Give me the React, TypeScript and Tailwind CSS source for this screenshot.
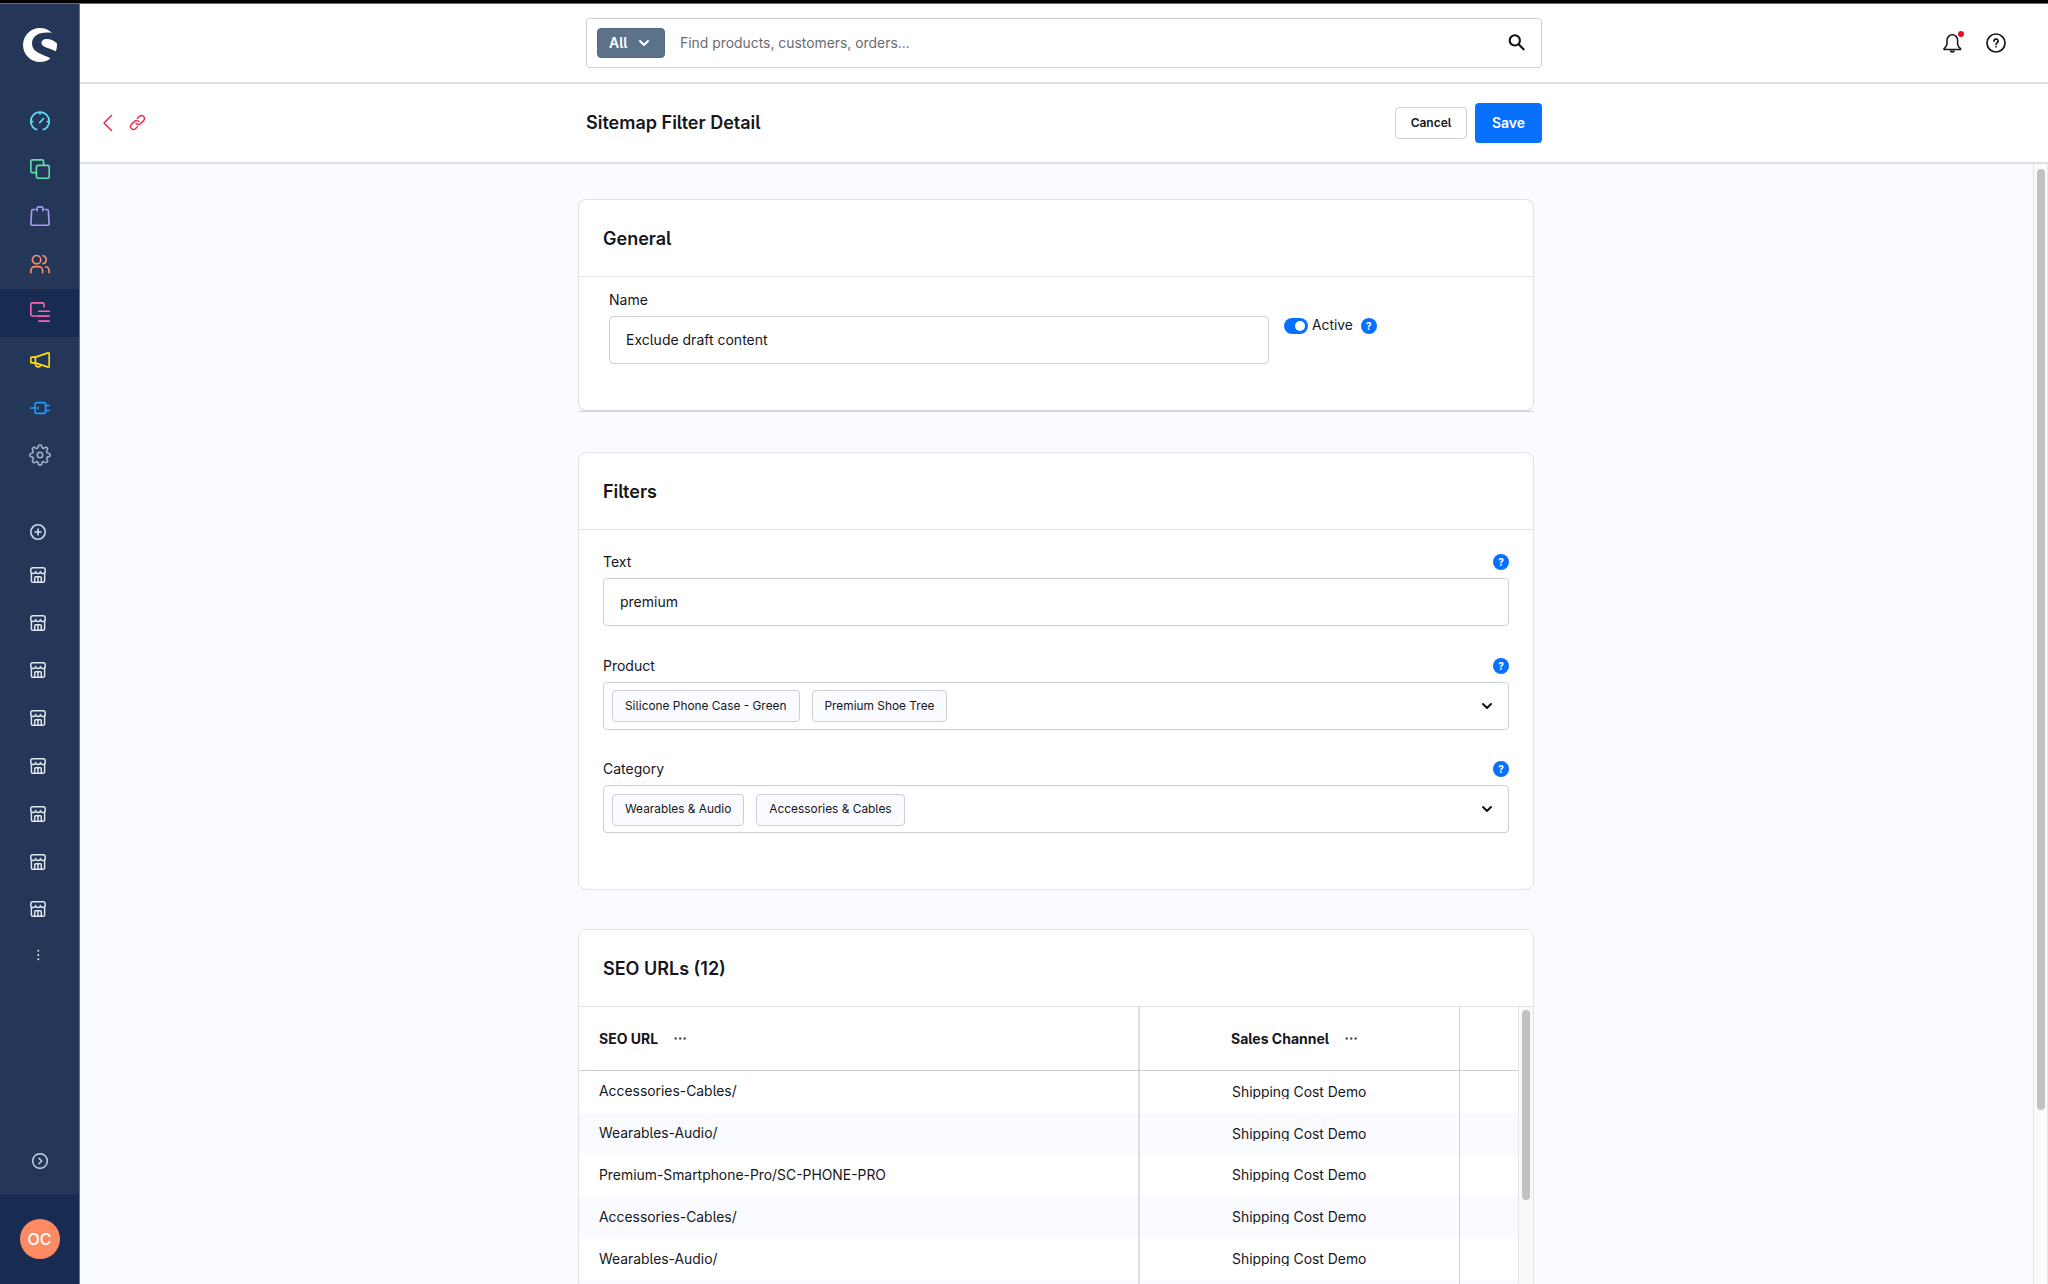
import type { ReactNode } from "react";
import { SiShopware } from "react-icons/si";
import { FiSettings } from "react-icons/fi";

function Icon({ children, className = "", size = 20, stroke = 1.65 }: { children: ReactNode; className?: string; size?: number; stroke?: number }) {
  return (
    <svg
      width={size}
      height={size}
      viewBox={`0 0 ${size} ${size}`}
      fill="none"
      stroke="currentColor"
      strokeWidth={stroke}
      strokeLinecap="round"
      strokeLinejoin="round"
      className={`shrink-0 ${className}`}
    >
      {children}
    </svg>
  );
}

const navItems = [
  {
    name: "dashboard",
    color: "text-[#5fdcf6]",
    icon: (
      <>
        <path d="M6.8 18.4H5.6A9.2 9.2 0 1 1 14.4 18.4H13.2" />
        <path d="M9.8 11.6L13.5 7.5M10 1.2v2M1 10.6h1.8M17.200 10.6h1.8" />
      </>
    ),
  },
  {
    name: "catalogues",
    color: "text-[#5fdfa9]",
    icon: (
      <>
        <path d="M6 13.6H2.500A1.7 1.7 0 0 1 .8 11.900V2.500A1.7 1.7 0 0 1 2.500.8h9.400a1.7 1.7 0 0 1 1.7 1.7V6" />
        <rect x="6.4" y="6.4" width="12.8" height="12.8" rx="1.7" />
      </>
    ),
  },
  {
    name: "orders",
    color: "text-[#a99bf7]",
    icon: (
      <>
        <path d="M5 3.5H3.2a1.6 1.6 0 0 0-1.6 1.5L.9 17.4a1.7 1.7 0 0 0 1.7 1.8h14.800a1.7 1.7 0 0 0 1.7-1.8L18.4 5a1.6 1.6 0 0 0-1.6-1.5H15" />
        <path d="M7 4.800V2.8a2 2 0 0 1 2-2h2a2 2 0 0 1 2 2v2" />
      </>
    ),
  },
  {
    name: "customers",
    color: "text-[#fa8d66]",
    icon: (
      <>
        <circle cx="6.6" cy="5.7" r="4.2" />
        <path d="M13 1.7a4.1 4.1 0 0 1 0 8" />
        <path d="M.9 18.8v-2.2a4 4 0 0 1 4-4h3.700a4 4 0 0 1 4 4v2.2M15.6 12.8a4 4 0 0 1 3.500 4v2" />
      </>
    ),
  },
  {
    name: "content",
    color: "text-[#f765b8]",
    active: true,
    icon: (
      <>
        <path d="M4.8 14H2.500A1.7 1.7 0 0 1 .8 12.300V2.500A1.7 1.7 0 0 1 2.500.8h9.800A1.7 1.7 0 0 1 14 2.500v2.300" />
        <path d="M8.8 9.2h10.400M6.2 14.1h13M8.8 19.1h10.400" />
      </>
    ),
  },
  {
    name: "marketing",
    color: "text-[#ffdf0a]",
    icon: (
      <>
        <path d="M1.8 7.1h3.600v5.8H1.8a1 1 0 0 1-1-1V8.1a1 1 0 0 1 1-1z" />
        <path d="M5.4 7.1L18.2 2.900a.8.8 0 0 1 1 .8v12.600a.8.8 0 0 1-1 .8L5.400 12.900" />
        <path d="M5.500 13.200v1a2.700 2.700 0 0 0 5.200 1" />
      </>
    ),
  },
  {
    name: "extensions",
    color: "text-[#189eff]",
    icon: (
      <>
        <rect x="5" y="4.600" width="10.600" height="10.800" rx="1.700" />
        <path d="M.8 10H5M7.800 9.200v1.600M15.600 7.500h3.600M15.600 12.500h3.600" />
      </>
    ),
  },
];

function StoreIcon() {
  return (
    <Icon size={16} stroke={1.450} className="text-[#e2e8f2]">
      <path d="M.8 4.500V3A2.200 2.200 0 0 1 3 .8h10A2.200 2.200 0 0 1 15.200 3v1.500a2.400 1.900 0 0 1-4.800 0a2.400 1.900 0 0 1-4.800 0a2.400 1.900 0 0 1-4.800 0z" />
      <path d="M1.400 6.500v7.400a1.300 1.300 0 0 0 1.300 1.300h10.600a1.300 1.300 0 0 0 1.300-1.300V6.500" />
      <path d="M4.700 15.200v-4.500a1 1 0 0 1 1-1h4.600a1 1 0 0 1 1 1v4.500M8 9.700v5.500" />
    </Icon>
  );
}

function Sidebar() {
  return (
    <aside className="flex w-20 shrink-0 flex-col border-r border-[#65738c] bg-[#243758]">
      <div className="flex h-[94px] shrink-0 items-start pl-[23px] pt-6">
        <SiShopware className="size-[34px] text-white" />
      </div>
      <nav className="flex flex-col">
        {navItems.map((item) => (
          <div
            key={item.name}
            className={`flex h-[47.8px] items-center pb-[2px] pl-[30px] ${item.color} ${item.active ? "bg-[#182b50]" : ""}`}
          >
            <Icon>{item.icon}</Icon>
          </div>
        ))}
        <div className="flex h-[47.8px] items-center pb-[2px] pl-[29px] text-[#a3b1c5]">
          <FiSettings className="size-[22px]" strokeWidth={1.7} />
        </div>
      </nav>
      <div className="mt-[44px] flex flex-col pl-[30px]">
        <Icon size={16} stroke={1.600} className="text-[#ccd8ec]">
          <circle cx="8" cy="8" r="7.200" />
          <path d="M8 5v6M5 8h6" />
        </Icon>
        <div className="mt-[10.600px] flex flex-col">
          {Array.from({ length: 8 }, (_, i) => (
            <div key={i} className="flex h-[47.8px] items-center">
              <StoreIcon />
            </div>
          ))}
        </div>
        <svg width="16" height="12" viewBox="0 0 16 12" className="mt-4 fill-[#dbe2ee]">
          <circle cx="8.300" cy="1.700" r="1" />
          <circle cx="8.300" cy="6" r="1" />
          <circle cx="8.300" cy="10.300" r="1" />
        </svg>
      </div>
      <div className="mt-auto flex h-[41px] shrink-0 pl-8">
        <Icon size={16} stroke={1.400} className="text-[#ccd8ec]">
          <circle cx="8" cy="8" r="7.300" />
          <path d="M6.900 5.300L9.700 8l-2.800 2.700" />
        </Icon>
      </div>
      <div className="flex h-[90px] shrink-0 items-center justify-center bg-[#182b50]">
        <div className="flex size-10 items-center justify-center rounded-full bg-[#fc8a62] pb-px text-base font-medium text-white">OC</div>
      </div>
    </aside>
  );
}

function Chevron({ className = "" }: { className?: string }) {
  return (
    <svg width="12" height="8" viewBox="0 0 12 8" fill="none" stroke="currentColor" strokeWidth="2" strokeLinecap="round" strokeLinejoin="round" className={`shrink-0 ${className}`}>
      <path d="M2 2l4 4 4-4" />
    </svg>
  );
}

function Help() {
  return (
    <span className="flex size-4 shrink-0 items-center justify-center rounded-full bg-[#0870ff] text-[10px] font-bold leading-none text-white">?</span>
  );
}

function TopBar() {
  return (
    <header className="flex h-20 shrink-0 items-center border-b-2 border-[#dfe0e5] bg-white">
      <div className="ml-[506px] flex h-[50px] w-[956px] items-center rounded border border-[#cdcfd7] pl-2.5 pr-4">
        <div className="flex h-[30px] w-[68px] items-center rounded border border-[#54697f] bg-[#5b7289] pl-[11px] text-sm font-semibold text-white">
          All
          <Chevron className="ml-2.5 w-3" />
        </div>
        <span className="ml-[15px] text-[13.9px] text-[#6b6b72]">Find products, customers, orders...</span>
        <svg width="17" height="17" viewBox="0 0 17 17" fill="none" stroke="#101014" strokeWidth="2.100" strokeLinecap="round" className="mb-0.5 ml-auto">
          <circle cx="6.800" cy="6.400" r="5.100" />
          <path d="M10.600 10.200l5 5.100" />
        </svg>
      </div>
      <div className="ml-auto mr-[42px] flex items-center">
        <div className="relative mr-6">
          <svg width="20" height="20" viewBox="0 0 20 20" fill="none" stroke="#15151a" strokeWidth="1.500" strokeLinejoin="round" strokeLinecap="round">
            <path d="M10.300 1.800A5.300 5.300 0 0 0 5 7.100v3.600c0 1-.4 1.900-1 2.700l-1.900 2.300a.5.500 0 0 0 .4.900h15.600a.5.500 0 0 0 .4-.9l-1.900-2.300c-.6-.8-1-1.700-1-2.700V7.100a5.300 5.300 0 0 0-5.300-5.300z" />
            <path d="M8.700 18.200c.8.900 2.400.9 3.200 0" strokeWidth="1.800" />
          </svg>
          <span className="absolute -top-[2px] left-4 size-1.5 rounded-full bg-[#e3121f]" />
        </div>
        <svg width="20" height="20" viewBox="0 0 20 20" fill="none" stroke="#15151a" strokeWidth="1.700" strokeLinecap="round" strokeLinejoin="round">
          <circle cx="10" cy="10" r="9" />
          <path d="M8 8.100a2.050 2.050 0 1 1 3.100 1.750c-.7.450-1.050.8-1.050 1.500M10.050 13.700v.05" />
        </svg>
      </div>
    </header>
  );
}

function PageHeader() {
  return (
    <div className="flex h-20 shrink-0 items-center border-b-2 border-[#dfe0e5] bg-white">
      <div className="ml-[22px] flex w-[484px] items-center gap-[15px] text-[#f02848]">
        <svg width="12" height="18" viewBox="0 0 12 18" fill="none" stroke="currentColor" strokeWidth="1.500" strokeLinecap="round" strokeLinejoin="round">
          <path d="M9.500 1.500L2 9l7.500 7.500" />
        </svg>
        <svg width="17" height="17" viewBox="0 0 24 24" fill="none" stroke="currentColor" strokeWidth="2" strokeLinecap="round" strokeLinejoin="round" className="mb-px">
          <path d="M9.800 12.800a4.300 4.300 0 0 0 6.400.9l4.700-4.700a4.200 4.200 0 0 0-5.900-5.900l-3 3" />
          <path d="M14.200 11.200a4.300 4.300 0 0 0-6.400-.9l-4.700 4.700a4.200 4.200 0 0 0 5.900 5.900l3-3" />
        </svg>
      </div>
      <div className="flex w-[956px] items-center justify-between">
        <h1 className="text-lg font-semibold leading-none">Sitemap Filter Detail</h1>
        <div className="flex items-center gap-2">
          <button className="h-8 w-[72px] rounded border border-[#cdcfd7] text-xs font-semibold">Cancel</button>
          <button className="h-10 w-[67px] rounded bg-[#0870ff] text-sm font-semibold text-white">Save</button>
        </div>
      </div>
    </div>
  );
}

function Card({ title, className = "", children }: { title: string; className?: string; children: ReactNode }) {
  return (
    <section className={`flex shrink-0 flex-col overflow-hidden rounded-lg border border-[#e1e2e8] bg-white ${className}`}>
      <h2 className="flex h-[77px] shrink-0 items-center border-b border-[#e1e2e8] pl-6 pt-0.5 text-lg font-semibold">{title}</h2>
      {children}
    </section>
  );
}

function Field({ label, tags, value }: { label: string; tags?: string[]; value?: string }) {
  return (
    <div className="mb-[27.6px] flex flex-col">
      <div className="mb-1 flex h-6 items-center justify-between text-sm">
        {label}
        <Help />
      </div>
      <div className="flex h-12 items-center rounded border border-[#cdcfd7] text-sm">
        {value && <span className="pl-4">{value}</span>}
        {tags && (
          <>
            <div className="flex gap-3 pl-2 pt-px">
              {tags.map((tag) => (
                <span key={tag} className="flex h-8 items-center rounded border border-[#cdcfd7] bg-[#fafbff] px-3 text-[11.88px]">
                  {tag}
                </span>
              ))}
            </div>
            <Chevron className="ml-auto mr-[15px] text-[#101014]" />
          </>
        )}
      </div>
    </div>
  );
}

function Dots() {
  return (
    <svg width="14" height="4" viewBox="0 0 14 4" className="fill-[#4c4c55]">
      <circle cx="2.700" cy="1.600" r="1.250" />
      <circle cx="7.200" cy="1.600" r="1.250" />
      <circle cx="11.700" cy="1.600" r="1.250" />
    </svg>
  );
}

const rows = ["Accessories-Cables/", "Wearables-Audio/", "Premium-Smartphone-Pro/SC-PHONE-PRO", "Accessories-Cables/", "Wearables-Audio/", "Premium-Smartphone-Pro/SC-PHONE-PRO"];

function UrlTable() {
  return (
    <div className="flex">
      <div className="flex grow flex-col">
        <div className="flex h-16 border-b border-[#cdcfd7] text-sm font-bold">
          <div className="flex w-[561px] items-center gap-[15px] border-r-2 border-[#dddee4] pl-5">
            SEO URL <Dots />
          </div>
          <div className="flex w-[320px] items-center gap-[15px] border-r border-[#cdcfd7] pl-[91px]">
            Sales Channel <Dots />
          </div>
        </div>
        {rows.map((url, i) => (
          <div key={i} className="flex h-[41.8px] text-[13.9px] odd:bg-[#fafbff]">
            <div className="flex w-[561px] items-center border-r-2 border-[#dddee4] pl-5">{url}</div>
            <div className="flex w-[320px] items-center border-r border-[#cdcfd7] pl-[92px]">
              <span className="overflow-hidden leading-[14px]">Shipping Cost Demo</span>
            </div>
          </div>
        ))}
      </div>
      <div className="w-[15px] shrink-0 border-l border-[#e6e6e8] bg-[#fafafa] pl-[3px] pt-[3px]">
        <div className="h-[190px] w-2 rounded-full bg-[#c1c1c1]" />
      </div>
    </div>
  );
}

export default function App() {
  return (
    <div className="flex h-[1284px] w-[2048px] flex-col overflow-hidden bg-[#fafbff] font-[Inter,sans-serif] text-[#16161c] [font-feature-settings:'cv05']">
      <div className="h-1 shrink-0 border-b border-[#6c6c6c] bg-black" />
      <div className="flex min-h-0 grow">
        <Sidebar />
        <div className="flex min-w-0 grow flex-col">
          <TopBar />
          <PageHeader />
          <div className="flex min-h-0 grow">
            <main className="flex grow flex-col overflow-hidden pl-[498px] pt-[35px]">
              <div className="mb-10 w-[956px] shrink-0 border-b border-[#d3d4dc]">
                <Card title="General" className="h-[212px] border-b-[#d3d4dc]">
                  <div className="flex items-start pl-[30px] pt-[11px]">
                    <div className="w-[660px]">
                      <div className="mb-1 flex h-6 items-center text-sm">Name</div>
                      <div className="flex h-12 items-center rounded border border-[#cdcfd7] pl-4 text-sm">Exclude draft content</div>
                    </div>
                    <div className="ml-[15px] mt-[30px] flex h-4 items-center text-sm">
                      <span className="flex h-4 w-6 items-center justify-end rounded-full bg-[#0870ff] pr-[3px]">
                        <span className="size-2.5 rounded-full bg-white" />
                      </span>
                      <span className="ml-1 mr-2 text-[13.8px]">Active</span>
                      <Help />
                    </div>
                  </div>
                </Card>
              </div>
              <Card title="Filters" className="mb-[39px] h-[438px] w-[956px]">
                <div className="flex flex-col px-6 pt-5">
                  <Field label="Text" value="premium" />
                  <Field label="Product" tags={["Silicone Phone Case - Green", "Premium Shoe Tree"]} />
                  <Field label="Category" tags={["Wearables & Audio", "Accessories & Cables"]} />
                </div>
              </Card>
              <Card title="SEO URLs (12)" className="w-[956px]">
                <UrlTable />
              </Card>
            </main>
            <div className="w-[15px] shrink-0 border-x border-[#e6e6e8] bg-[#fafafa] pl-[3px] pt-[5px]">
              <div className="h-[941px] w-2 rounded-full bg-[#c1c1c1]" />
            </div>
          </div>
        </div>
      </div>
    </div>
  );
}
